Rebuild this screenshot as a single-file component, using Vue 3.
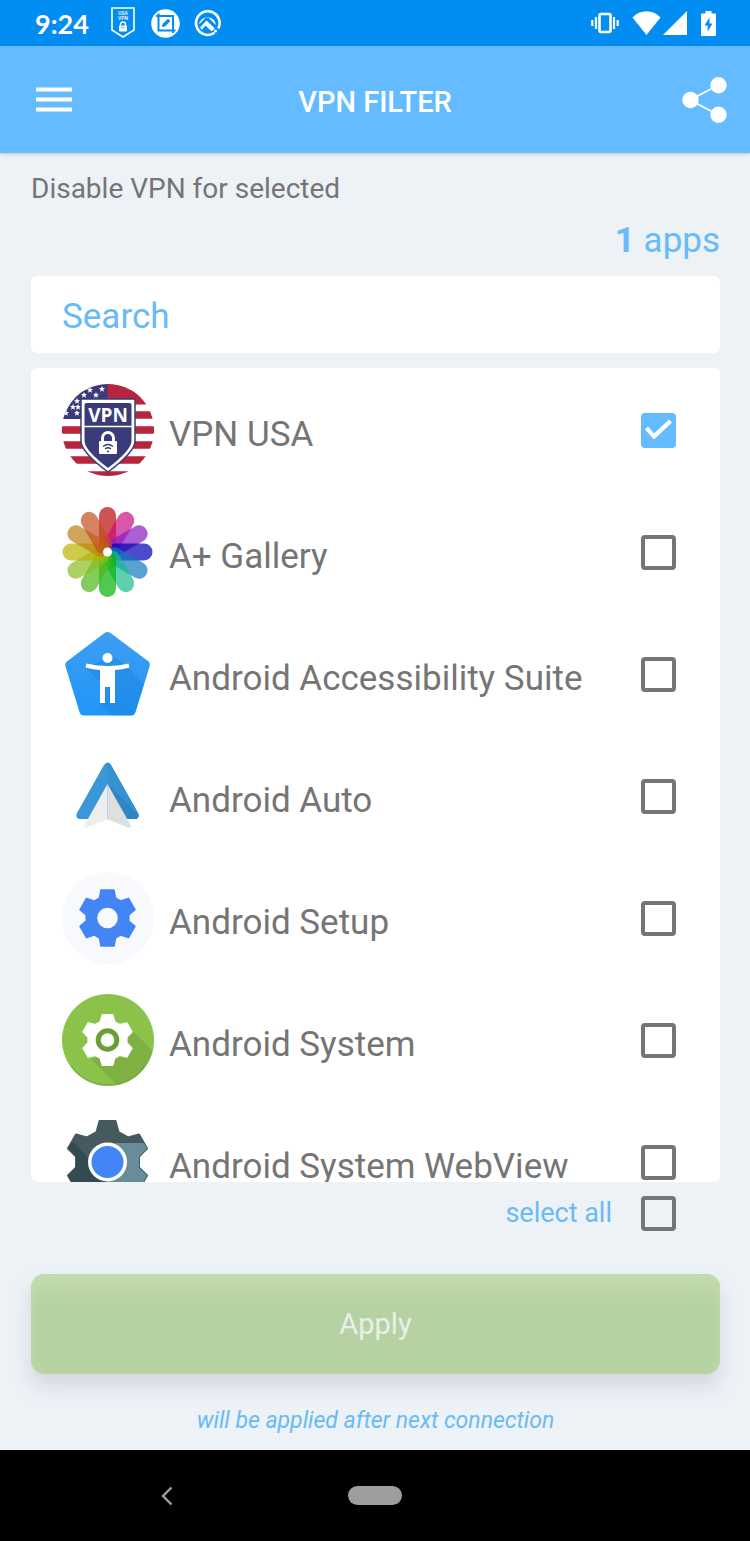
<script setup>
import { ref, computed } from 'vue'

const apps = ref([
  { id: 'vpn', name: 'VPN USA', selected: true },
  { id: 'gallery', name: 'A+ Gallery', selected: false },
  { id: 'accessibility', name: 'Android Accessibility Suite', selected: false },
  { id: 'auto', name: 'Android Auto', selected: false },
  { id: 'setup', name: 'Android Setup', selected: false },
  { id: 'system', name: 'Android System', selected: false },
  { id: 'webview', name: 'Android System WebView', selected: false }
])

const search = ref('')

const visibleApps = computed(() => {
  const term = search.value.trim().toLowerCase()
  return apps.value.filter(app => app.name.toLowerCase().includes(term))
})

const selectedCount = computed(() => apps.value.filter(app => app.selected).length)

const allSelected = computed({
  get: () => selectedCount.value === apps.value.length,
  set: value => apps.value.forEach(app => { app.selected = value })
})

const petals = [
  '#bd0808', '#c90f80', '#871cc4', '#0000b5', '#107aba', '#18bc8a',
  '#05b205', '#4eb715', '#8abd1f', '#b8b300', '#bd7f13', '#c34f1c'
]

const stars = [
  [40, 5], [28, 6], [22, 11], [34, 11], [15, 17], [11, 23], [16, 23], [4, 29], [15, 29]
]

// six-toothed wheel around 0,0
const gear = (tip, base, tipHalf, baseHalf) => {
  const tooth = [[-baseHalf, -base], [-tipHalf, -tip], [tipHalf, -tip], [baseHalf, -base]]
  const points = []
  for (let i = 0; i < 6; i++) {
    const a = i * Math.PI / 3
    tooth.forEach(([x, y]) => {
      points.push(`${(x * Math.cos(a) - y * Math.sin(a)).toFixed(2)} ${(x * Math.sin(a) + y * Math.cos(a)).toFixed(2)}`)
    })
  }
  return `M${points.join('L')}Z`
}

const setupGear = gear(28, 20, 6.5, 8)
const systemGear = gear(25, 18, 5, 7)
const webviewGear = gear(41, 30, 8, 11)
</script>

<template>
  <div class="app">
    <div class="status">
      <span class="time">9:24</span>
      <svg class="status-shield" viewBox="0 0 24 32">
        <path d="M1 1H23V23L12 30L1 23Z" fill="none" stroke="#fff" stroke-width="1.6" />
        <text x="12" y="8" class="tiny">USA</text>
        <text x="12" y="13" class="tiny">VPN</text>
        <path d="M9.5 19V17.500a2.500 2.500 0 0 1 5 0V19" fill="none" stroke="#fff" stroke-width="1.400" />
        <rect x="8" y="18.500" width="8" height="6" rx="1" fill="#fff" />
        <path d="M10.500 20.500q1.500-1 3 0M11.500 22h1" stroke="#028df3" stroke-width=".7" fill="none" />
      </svg>
      <svg class="status-icon" viewBox="0 0 29 29">
        <circle cx="14.500" cy="14.500" r="14.300" fill="#fff" />
        <path d="M5 7H22V24M7.500 4.500V21.500H24.500" fill="none" stroke="#028df3" stroke-width="2" />
        <path d="M11 18l.6-3 5.400-5.200 2.400 2.300-5.400 5.300z" fill="#028df3" />
      </svg>
      <svg class="status-icon" viewBox="0 0 29 29">
        <path d="M21.500 23.800A11.800 11.800 0 1 1 25.300 19.500" fill="none" stroke="#fff" stroke-width="2.600" />
        <path d="M6 15.500A8.500 8.500 0 0 1 22.900 16L15.500 8.800H12.500Z" fill="#fff" />
        <path d="M7 18.500L13.500 11.500L21.700 19.200A8.500 8.500 0 0 1 18.500 22.200L12.500 16.500L9 20.800Z" fill="#fff" />
        <circle cx="22.500" cy="22" r="1.600" fill="#fff" />
      </svg>
      <div class="status-right">
        <svg class="vibrate" viewBox="0 0 28 22" fill="none" stroke="#fff">
          <rect x="8.500" y="2" width="11" height="18" rx="1.500" stroke-width="2.600" />
          <path d="M5 5V17M1.300 8V14M23 5V17M26.700 8V14" stroke-width="2.200" />
        </svg>
        <svg class="wifi" viewBox="0 0 29 24">
          <path d="M.5 6.500C8-2 21-2 28.500 6.500L14.500 24Z" fill="#fff" />
        </svg>
        <svg class="signal" viewBox="0 0 24 24">
          <path d="M24 0V24H0Z" fill="#fff" />
        </svg>
        <svg class="battery" viewBox="0 0 15 25">
          <path d="M4.500 0h6v2.500H14a1 1 0 0 1 1 1V24a1 1 0 0 1-1 1H1a1 1 0 0 1-1-1V3.500a1 1 0 0 1 1-1H4.500Z" fill="#fff" />
          <path d="M8.500 6.500L3.500 14.500H6.700V20.500L11.500 12.500H8.500Z" fill="#028df3" />
        </svg>
      </div>
    </div>

    <header class="header">
      <button class="icon-button menu" type="button" aria-label="Menu">
        <svg class="menu-icon" viewBox="0 0 36 26">
          <path d="M0 2.500H36M0 12.500H36M0 22.500H36" stroke="#fff" stroke-width="4" />
        </svg>
      </button>
      <h1>VPN FILTER</h1>
      <button class="icon-button share" type="button" aria-label="Share">
        <svg class="share-icon" viewBox="0 0 46 46">
          <path d="M36.500 8L8 23L36.500 38" fill="none" stroke="#fff" stroke-width="1.800" />
          <circle cx="8.500" cy="23" r="8.200" fill="#fff" />
          <circle cx="36.500" cy="8.200" r="8.200" fill="#fff" />
          <circle cx="36.500" cy="37.800" r="8.200" fill="#fff" />
        </svg>
      </button>
    </header>

    <main class="content">
      <p class="intro">Disable VPN for selected</p>
      <p class="count"><b>{{ selectedCount }}</b> apps</p>

      <input v-model="search" class="search" type="text" placeholder="Search" aria-label="Search">

      <ul class="list">
        <li v-for="app in visibleApps" :key="app.id">
          <label class="row">
            <svg class="app-icon" viewBox="0 0 92 92">
              <template v-if="app.id === 'vpn'">
                <clipPath id="flag"><circle cx="46" cy="46" r="46" /></clipPath>
                <g clip-path="url(#flag)">
                  <rect width="92" height="92" fill="#fff" />
                  <path d="M0 10H92M0 31H92M0 46H92M0 61H92M0 76H92M0 91H92" stroke="#b6253c" stroke-width="7.500" />
                  <rect x="45" width="47" height="20.500" fill="#b6253c" />
                  <rect width="45.500" height="35" fill="#3a3c79" />
                  <path
                    v-for="(star, i) in stars" :key="i" :transform="`translate(${star[0]} ${star[1]})`"
                    d="M0-3L.9-.9L3-.9L1.300.5L2 2.700L0 1.400L-2 2.700L-1.300.5L-3-.9L-.9-.9Z" fill="#fff"
                  />
                </g>
                <path d="M19 15H73V57Q73 68 46 88Q19 68 19 57Z" fill="#fff" stroke="#3a3c79" stroke-width="1.500" />
                <path d="M22.500 21Q22.500 19 24.500 19H67.500Q69.500 19 69.500 21V57Q69.500 66 46 84Q22.500 66 22.500 57Z" fill="#3a3c79" />
                <path d="M22 42.500H70" stroke="#fff" stroke-width="1.500" />
                <text x="46" y="38" class="vpn-text">VPN</text>
                <path d="M40.500 59V54a5.500 5.500 0 0 1 11 0V59" fill="none" stroke="#fff" stroke-width="3" />
                <rect x="37" y="57" width="18" height="13" rx="1" fill="#fff" />
                <path d="M41 62.500Q46 58.500 51 62.500M43 65Q46 62.500 49 65M45 67.500H47" fill="none" stroke="#3a3c79" stroke-width="1.300" />
              </template>

              <template v-else-if="app.id === 'gallery'">
                <path
                  v-for="(color, i) in petals" :key="color" :fill="color" :transform="`translate(45.500 46) rotate(${i * 30})`"
                  d="M-8.500-36.500A8.500 8.500 0 0 1 8.500-36.500V-8Q8.500 0 0 0Q-8.500 0-8.500-8Z" fill-opacity=".7"
                />
                <circle cx="45.500" cy="46" r="4.500" fill="#fff" />
              </template>

              <template v-else-if="app.id === 'accessibility'">
                <linearGradient id="suite" x2="0" y2="1">
                  <stop offset="0" stop-color="#3e9df1" /><stop offset="1" stop-color="#2196f8" />
                </linearGradient>
                <path d="M42.500 5Q45.500 3 48.500 5L86 33Q88.500 35 87.600 38.500L73.500 84Q72.500 87.500 69 87.500H22Q18.500 87.500 17.500 84L3.500 38.500Q2.500 35 5.500 33Z" fill="url(#suite)" />
                <path d="M24 40L38 54V75L50.500 87.500H69Q72.500 87.500 73.500 84L82 57L66 39L50 27Z" fill="#1778d2" opacity=".3" />
                <circle cx="45.500" cy="30" r="5" fill="#fff" />
                <path d="M24.500 35.500Q45.500 40.500 66.500 35.500L67.500 39.500Q60 41.500 53 42V75H48V59H43V75H38V42Q31 41.500 23.500 39.500Z" fill="#fff" />
              </template>

              <template v-else-if="app.id === 'auto'">
                <path d="M42 15Q45.500 10 49 15L76 63Q78 67.500 74 69H17Q13 67.500 15 63Z" fill="#3998d5" />
                <path d="M45.500 12.500Q47.500 12.500 49 15L76 63Q78 67.500 74 69H66L45.500 34Z" fill="#3592d0" />
                <path d="M45.500 34L62 50L76.500 65Q76.500 68 74 69H66Z" fill="#2f86c2" />
                <path d="M45.500 34L22 76Q22 78.500 26 77L45.500 69.500Z" fill="#eeeeee" />
                <path d="M45.500 34L69 76Q69 78.500 65 77L45.500 69.500Z" fill="#dfdfdf" />
              </template>

              <template v-else-if="app.id === 'setup'">
                <circle cx="46" cy="46" r="46" fill="#f8f9fc" />
                <g transform="translate(45.500 46)">
                  <path :d="setupGear" fill="#4385f5" stroke="#4385f5" stroke-width="1.500" stroke-linejoin="round" />
                  <circle r="10.300" fill="#f8f9fc" />
                </g>
              </template>

              <template v-else-if="app.id === 'system'">
                <clipPath id="disc"><circle cx="46" cy="46" r="46" /></clipPath>
                <circle cx="46" cy="46" r="46" fill="#8bc34a" />
                <path d="M29 65L58 94L96 78V62L70 36L55 60Z" fill="#7fb142" clip-path="url(#disc)" />
                <path d="M9 72A45.500 45.500 0 0 0 83 72" fill="none" stroke="#73a33f" />
                <g transform="translate(45.500 46)">
                  <path :d="systemGear" fill="#fff" stroke="#fff" stroke-width="2" stroke-linejoin="round" />
                  <circle r="9.300" fill="#fff" stroke="#689f38" stroke-width="5" />
                </g>
              </template>

              <template v-else>
                <clipPath id="wheel"><path :d="webviewGear" /></clipPath>
                <g transform="translate(45.500 46)">
                  <path :d="webviewGear" fill="#455a5f" stroke="#455a5f" stroke-width="2" stroke-linejoin="round" />
                  <g clip-path="url(#wheel)">
                    <path d="M0-19H46V46H0Z" fill="#698c9b" />
                    <path d="M-34-20L0 18V46H-46V-12Z" fill="#324a50" />
                  </g>
                  <circle r="19.500" fill="#fff" />
                  <circle r="16" fill="#4285f4" />
                </g>
              </template>
            </svg>
            <span class="name">{{ app.name }}</span>
            <input v-model="app.selected" class="check" type="checkbox">
          </label>
        </li>
      </ul>

      <label class="select-all">
        <span>select all</span>
        <input v-model="allSelected" class="check" type="checkbox">
      </label>

      <button class="apply" type="button">Apply</button>
      <p class="note">will be applied after next connection</p>
    </main>

    <nav class="nav">
      <button class="icon-button back" type="button" aria-label="Back">
        <svg class="back-icon" viewBox="0 0 14 20">
          <path d="M11.500 1.500L3 10L11.500 18.500" fill="none" stroke="#a0a0a0" stroke-width="2.400" />
        </svg>
      </button>
      <button class="home" type="button" aria-label="Home"></button>
    </nav>
  </div>
</template>

<style>
body {
  margin: 0;
  background: #edf2f7;
}
</style>

<style scoped>
* {
  box-sizing: border-box;
}
.app {
  display: flex;
  flex-direction: column;
  height: 100vh;
  font-family: Roboto, sans-serif;
  background: #edf2f7;
  color: #757575;
}
h1, p, ul {
  margin: 0;
  padding: 0;
}
button {
  font-family: inherit;
  border: none;
  padding: 0;
  cursor: pointer;
}
svg {
  display: block;
  flex: none;
}

.status {
  display: flex;
  align-items: center;
  flex: none;
  height: 46px;
  padding: 0 34px 0 35px;
  background: #028df3;
}
.time {
  font-family: Lato, sans-serif;
  font-size: 27px;
  font-weight: 700;
  color: #fff;
  margin-right: 22px;
}
.status-shield {
  width: 24px;
  height: 32px;
  margin-right: 16px;
}
.tiny {
  font-size: 5px;
  font-weight: 500;
  fill: #fff;
  text-anchor: middle;
}
.status-icon {
  width: 29px;
  height: 29px;
  margin-right: 13px;
}
.status-right {
  display: flex;
  align-items: center;
  margin-left: auto;
}
.vibrate {
  width: 28px;
  height: 22px;
  margin-right: 13px;
}
.wifi {
  width: 29px;
  height: 24px;
  margin-right: 2px;
}
.signal {
  width: 24px;
  height: 24px;
  margin-right: 14px;
}
.battery {
  width: 15px;
  height: 25px;
}

.header {
  display: grid;
  grid-template-columns: 1fr auto 1fr;
  align-items: center;
  flex: none;
  height: 107px;
  padding: 0 22px;
  background: #64bbff;
  box-shadow: 0 1px 4px rgba(0, 0, 0, 0.2);
}
.header h1 {
  padding-top: 4px;
  font-size: 29px;
  font-weight: 500;
  line-height: 40px;
  color: #fff;
}
.icon-button {
  background: none;
}
.menu {
  justify-self: start;
  padding-left: 14px;
}
.share {
  justify-self: end;
}
.menu-icon {
  width: 36px;
  height: 26px;
}
.share-icon {
  width: 46px;
  height: 46px;
}

.content {
  display: flex;
  flex-direction: column;
  flex: 1;
  min-height: 0;
  padding: 16px 30px 14px 31px;
}
.intro {
  font-size: 28px;
  line-height: 40px;
}
.count {
  margin: 12px 0 15px;
  font-size: 35px;
  line-height: 40px;
  text-align: right;
  color: #68bbf5;
}
.search {
  width: 100%;
  height: 77px;
  flex: none;
  margin-bottom: 15px;
  padding: 4px 31px 0;
  border: none;
  border-radius: 6px;
  outline: none;
  background: #fff;
  font-family: inherit;
  font-size: 35px;
  color: #68bbf5;
}
.search::placeholder {
  color: #68bbf5;
  opacity: 1;
}
.list {
  flex: 1;
  min-height: 0;
  padding-top: 1px;
  overflow-y: auto;
  scrollbar-width: none;
  list-style: none;
  background: #fff;
  border-radius: 6px;
}
.row {
  display: flex;
  align-items: center;
  gap: 15px;
  padding: 15px 44px 15px 31px;
  cursor: pointer;
}
.app-icon {
  width: 92px;
  height: 92px;
}
.vpn-text {
  font-family: "Open Sans", sans-serif;
  font-size: 19px;
  font-weight: 700;
  fill: #fff;
  text-anchor: middle;
}
.name {
  flex: 1;
  padding-top: 10px;
  font-size: 35px;
  line-height: 44px;
  white-space: nowrap;
}
.check {
  appearance: none;
  flex: none;
  width: 35px;
  height: 35px;
  margin: 0;
  border: 4px solid #757575;
  border-radius: 4px;
  cursor: pointer;
}
.check:checked {
  border: none;
  background: #64bbff;
}
.check:checked::after {
  content: "";
  display: block;
  width: 35px;
  height: 35px;
  background: #fff;
  clip-path: polygon(4px 17px, 7px 14px, 13px 21px, 28px 7px, 31px 10px, 13px 27px);
}

.select-all {
  display: flex;
  align-items: center;
  justify-content: flex-end;
  flex: none;
  gap: 29px;
  height: 62px;
  padding-right: 44px;
  font-size: 27px;
  color: #68bbf5;
  cursor: pointer;
}
.apply {
  flex: none;
  height: 100px;
  margin-top: 30px;
  border-radius: 14px;
  font-size: 29px;
  color: #e8f0ea;
  background: #b7d2a2;
  box-shadow: 0 12px 20px rgba(100, 110, 120, 0.2), inset 0 18px 18px -4px #c2dcad, inset 0 0 12px #bad6a5;
}
.note {
  margin-top: 32px;
  font-size: 23px;
  line-height: 30px;
  font-style: italic;
  text-align: center;
  color: #68bbf5;
}

.nav {
  display: grid;
  grid-template-columns: 1fr auto 1fr;
  align-items: center;
  flex: none;
  height: 91px;
  background: #000;
}
.back {
  justify-self: center;
  padding-right: 14px;
}
.back-icon {
  width: 14px;
  height: 20px;
}
.home {
  width: 54px;
  height: 19px;
  border-radius: 10px;
  background: #9e9e9e;
}
</style>
